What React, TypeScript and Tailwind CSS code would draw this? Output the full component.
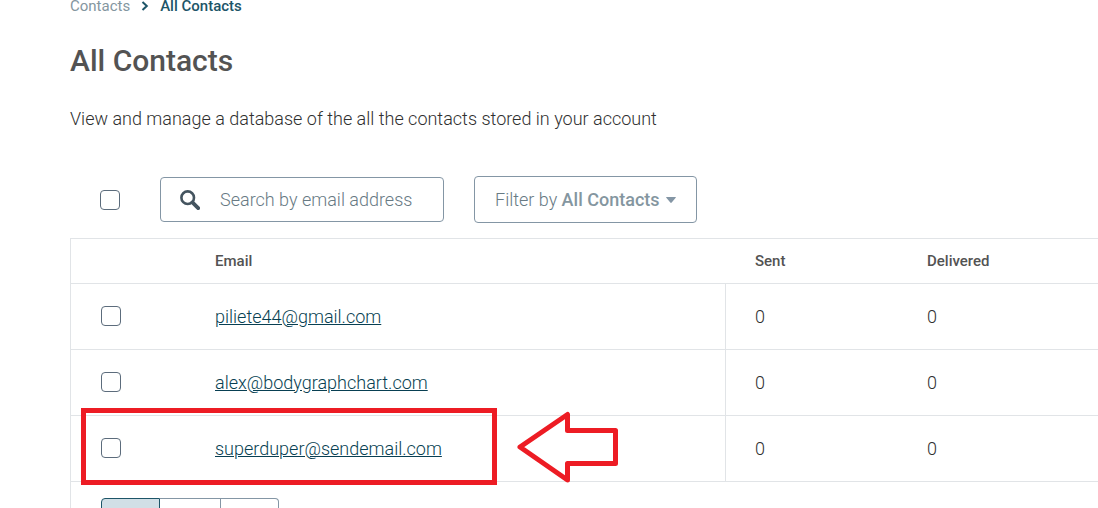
import type { ReactNode } from 'react';

type Contact = { email: string; sent: number; delivered: number; highlighted?: boolean };

const contacts: Contact[] = [
  { email: 'piliete44@gmail.com', sent: 0, delivered: 0 },
  { email: 'alex@bodygraphchart.com', sent: 0, delivered: 0 },
  { email: 'superduper@sendemail.com', sent: 0, delivered: 0, highlighted: true },
];

function Checkbox({ label }: { label: string }) {
  return (
    <input
      type="checkbox"
      aria-label={label}
      className="block size-5 shrink-0 appearance-none rounded border border-[#5c6c7c] bg-white checked:bg-[#1d5568]"
    />
  );
}

function Breadcrumbs() {
  return (
    <nav aria-label="Breadcrumb" className="flex h-3 items-center text-[15px] leading-5">
      <a href="#contacts" className="text-[#8496a0]">Contacts</a>
      <svg aria-hidden="true" viewBox="0 0 8 10" className="mx-[11px] h-[10px] w-2" fill="none" stroke="#1d5568" strokeWidth="2">
        <path d="M1.5 1 5.8 5 1.5 9" />
      </svg>
      <a href="#all" className="font-medium text-[#1d5568]">All Contacts</a>
    </nav>
  );
}

function Toolbar() {
  return (
    <div className="flex items-center pl-[30px]">
      <Checkbox label="Select all contacts" />
      <label className="ml-10 flex h-[45px] w-[284px] items-center rounded border border-[#8496a5] bg-white pl-[19px]">
        <svg aria-hidden="true" viewBox="0 0 20 20" className="size-5 shrink-0" fill="none" stroke="#44545f">
          <circle cx="7.7" cy="7.7" r="6.3" strokeWidth="2.6" />
          <path d="M12.4 12.4 18.2 18.2" strokeWidth="3.8" strokeLinecap="round" />
        </svg>
        <input
          type="search"
          aria-label="Search by email address"
          placeholder="Search by email address"
          className="ml-5 w-full min-w-0 bg-transparent text-lg leading-6 font-light outline-none placeholder:text-[#687a84]"
        />
      </label>
      <button type="button" className="ml-[30px] flex h-[47px] w-[223px] items-center rounded border border-[#8496a5] bg-white pl-5 text-lg leading-6 text-[#8496a0]">
        <span className="font-light whitespace-nowrap text-[#687a84]">Filter by <span className="font-medium text-[#8496a0]">All Contacts</span></span>
        <svg aria-hidden="true" viewBox="0 0 10 6" className="ml-[6px] h-[6px] w-[10px] shrink-0" fill="#8496a5">
          <path d="M.8 0h8.4q1.2 0 .5.8L5.7 5.6q-.7.8-1.4 0L.3.8Q-.4 0 .8 0Z" />
        </svg>
      </button>
    </div>
  );
}

function HeaderCell({ children }: { children: ReactNode }) {
  return <th scope="col" className="border-b border-[#e1e4e7] p-0 pl-[29px] text-left font-medium">{children}</th>;
}

function Highlight() {
  return (
    <>
      <span aria-hidden="true" className="pointer-events-none absolute -top-2 left-[-134px] h-[77px] w-[416px] border-5 border-[#ed1c24]" />
      <svg aria-hidden="true" viewBox="0 0 102 72" className="pointer-events-none absolute -top-[5px] left-[302px] h-[72px] w-[102px]">
        <path d="M3 36 50.500 3.500V19.500H98.500V52.500H50.500V69Z" fill="none" stroke="#ed1c24" strokeWidth="5" strokeLinejoin="round" />
      </svg>
    </>
  );
}

function ContactsTable() {
  return (
    <table className="w-full table-fixed border-separate border-spacing-0 border-t border-[#e1e4e7]">
      <colgroup>
        <col className="w-36" />
        <col className="w-[511px]" />
        <col className="w-[172px]" />
        <col />
      </colgroup>
      <thead>
        <tr className="h-[45px] text-[15px] leading-5">
          <td className="border-b border-[#e1e4e7] p-0" />
          <th scope="col" className="border-b border-[#e1e4e7] p-0 text-left font-medium">Email</th>
          <HeaderCell>Sent</HeaderCell>
          <HeaderCell>Delivered</HeaderCell>
        </tr>
      </thead>
      <tbody>
        {contacts.map((contact) => (
          <tr key={contact.email} className="h-[66px] text-lg leading-6 font-light text-[#303030]">
            <td className="border-b border-[#e1e4e7] p-0 pb-px pl-[30px]">
              <Checkbox label={`Select ${contact.email}`} />
            </td>
            <td className="relative border-r border-b border-[#e1e4e7] p-0">
              <a href={`#${contact.email}`} className="text-[#083f52] underline">{contact.email}</a>
              {contact.highlighted && <Highlight />}
            </td>
            <td className="border-b border-[#e1e4e7] p-0 pl-[29px]">{contact.sent}</td>
            <td className="border-b border-[#e1e4e7] p-0 pl-[29px]">{contact.delivered}</td>
          </tr>
        ))}
      </tbody>
    </table>
  );
}

function Pagination() {
  return (
    <div className="flex px-[30px] pt-4">
      <button type="button" aria-label="Page 1" className="h-11 w-[59px] rounded-l border border-[#1d5568] bg-[#d1dfe6]" />
      <button type="button" aria-label="Page 2" className="h-11 w-[61px] border-t border-r border-b border-[#8496a5] bg-white" />
      <button type="button" aria-label="Next page" className="h-11 w-[58px] rounded-r border-t border-r border-b border-[#8496a5] bg-white" />
    </div>
  );
}

export default function App() {
  return (
    <main className="h-screen overflow-hidden bg-white pl-[70px] font-[Roboto,sans-serif] text-[#535353]">
      <Breadcrumbs />
      <h1 className="mt-[29px] text-3xl leading-10 font-medium">All Contacts</h1>
      <p className="mt-[26px] mb-[45px] text-lg leading-6 font-light text-[#303030]">
        View and manage a database of the all the contacts stored in your account
      </p>
      <Toolbar />
      <section aria-label="Contacts" className="mt-[15px] border-l border-[#e1e4e7]">
        <ContactsTable />
        <Pagination />
      </section>
    </main>
  );
}
